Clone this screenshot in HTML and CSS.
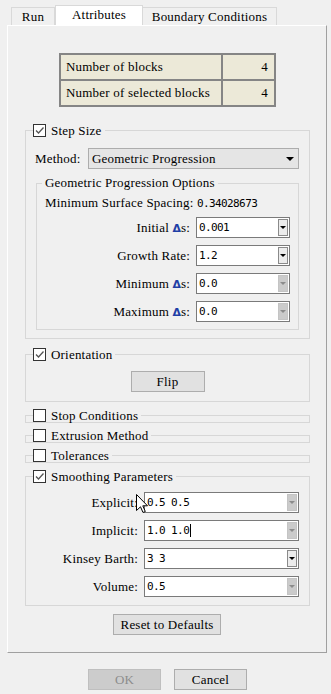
FILE: index.html
```html
<!DOCTYPE html>
<html lang="en">
<head>
  <meta charset="UTF-8">
  <title>Attributes</title>
  <link rel="stylesheet" href="styles.css">
</head>
<body>
  <div class="tabs">
    <div class="tab tab-run">Run</div>
    <div class="tab tab-active">Attributes</div>
    <div class="tab tab-bc">Boundary Conditions</div>
  </div>

  <div class="panel">
    <div class="info">
      <div class="cell">Number of blocks</div>
      <div class="cell num">4</div>
      <div class="cell">Number of selected blocks</div>
      <div class="cell num">4</div>
    </div>

    <fieldset class="group step">
      <legend><span class="cb checked"><svg width="11" height="11" viewBox="0 0 11 11"><path d="M2 5.5 L4.5 8 L9.5 2.5" fill="none" stroke="#555" stroke-width="1.3"/></svg></span>Step Size</legend>
      <div class="method">
        <span class="method-label">Method:</span>
        <div class="select"><span>Geometric Progression</span><i class="tri"></i></div>
      </div>
      <fieldset class="sub">
        <legend>Geometric Progression Options</legend>
        <div class="spacing">Minimum Surface Spacing: <span class="val">0.34028673</span></div>
        <div class="row first">
          <span>Initial <b class="delta">Δ</b>s:</span>
          <div class="combo w94"><span class="val">0.001</span><i class="drop"></i></div>
        </div>
        <div class="row">
          <span>Growth Rate:</span>
          <div class="combo w94"><span class="val">1.2</span><i class="drop"></i></div>
        </div>
        <div class="row">
          <span>Minimum <b class="delta">Δ</b>s:</span>
          <div class="combo w94"><span class="val">0.0</span><i class="drop off"></i></div>
        </div>
        <div class="row">
          <span>Maximum <b class="delta">Δ</b>s:</span>
          <div class="combo w94"><span class="val">0.0</span><i class="drop off"></i></div>
        </div>
      </fieldset>
    </fieldset>

    <fieldset class="group orient">
      <legend><span class="cb checked"><svg width="11" height="11" viewBox="0 0 11 11"><path d="M2 5.5 L4.5 8 L9.5 2.5" fill="none" stroke="#555" stroke-width="1.3"/></svg></span>Orientation</legend>
      <button class="btn flip">Flip</button>
    </fieldset>

    <fieldset class="group closed first-closed">
      <legend><span class="cb"></span>Stop Conditions</legend>
    </fieldset>
    <fieldset class="group closed">
      <legend><span class="cb"></span>Extrusion Method</legend>
    </fieldset>
    <fieldset class="group closed">
      <legend><span class="cb"></span>Tolerances</legend>
    </fieldset>

    <fieldset class="group smooth">
      <legend><span class="cb checked"><svg width="11" height="11" viewBox="0 0 11 11"><path d="M2 5.5 L4.5 8 L9.5 2.5" fill="none" stroke="#555" stroke-width="1.3"/></svg></span>Smoothing Parameters</legend>
      <div class="row first">
        <span>Explicit:</span>
        <div class="combo w155">
          <span class="val">0.5 0.5</span><i class="drop off"></i>
          <svg class="cursor" width="13" height="20" viewBox="0 0 13 20"><path d="M0.5 0.5 V16.5 L4.5 12.8 L7 18.5 L9.3 17.5 L6.8 11.8 H11.5 Z" fill="#fff" stroke="#000" stroke-width="1" stroke-linejoin="miter"/></svg>
        </div>
      </div>
      <div class="row">
        <span>Implicit:</span>
        <div class="combo w155"><span class="val caret">1.0 1.0</span><i class="drop off"></i></div>
      </div>
      <div class="row">
        <span>Kinsey Barth:</span>
        <div class="combo w155"><span class="val">3 3</span><i class="drop"></i></div>
      </div>
      <div class="row">
        <span>Volume:</span>
        <div class="combo w155"><span class="val">0.5</span><i class="drop off"></i></div>
      </div>
    </fieldset>

    <button class="btn reset">Reset to Defaults</button>
  </div>

  <div class="footer">
    <button class="btn dlg" disabled>OK</button>
    <button class="btn dlg">Cancel</button>
  </div>
</body>
</html>
```

FILE: styles.css
```css
body {
  margin: 0;
  width: 331px;
  height: 694px;
  overflow: hidden;
  background: #f0f0f0;
  font-family: "Liberation Serif", "Noto Sans CJK SC", serif;
  font-size: 13px;
  line-height: 13px;
  letter-spacing: 0.2px;
  color: #000;
}
.tabs {
  display: flex;
  align-items: flex-end;
  height: 20px;
  padding: 5px 0 0 11px;
}
.tab {
  box-sizing: border-box;
  height: 18px;
  line-height: 17px;
  text-align: center;
  border: 1px solid #d9d9d9;
  border-bottom: none;
  background: #f0f0f0;
}
.tab-run { width: 44px; }
.tab-active {
  width: 88px;
  height: 20px;
  line-height: 17px;
  background: #fff;
  border-color: #d9d9d9;
}
.tab-bc { width: 134px; border-left: none; }

.panel {
  box-sizing: border-box;
  margin-left: 7px;
  width: 320px;
  height: 628px;
  padding-top: 27px;
  border: 1px solid;
  border-color: #fff #a0a0a0 #a0a0a0 #fff;
}

.info {
  display: grid;
  grid-template-columns: 160px 51px;
  grid-auto-rows: 24px;
  gap: 2px;
  padding: 2px;
  width: 213px;
  margin-left: 51px;
  background: #858585;
}
.cell {
  background: #ece9d8;
  line-height: 23px;
  padding-left: 5px;
}
.cell.num {
  text-align: right;
  padding: 0 6px 0 0;
}

fieldset {
  margin: 0;
  padding: 0;
  min-width: 0;
  border: 1px solid #d7d7d7;
}
.group {
  margin: 0 16px 0 17px;
}
.group > legend {
  display: flex;
  align-items: center;
  gap: 5px;
  height: 13px;
  line-height: 12px;
  margin-left: 7px;
  padding: 0 3px 0 0;
}
.cb {
  box-sizing: border-box;
  width: 13px;
  height: 13px;
  border: 1px solid #333;
  background: #fff;
  display: flex;
  align-items: center;
  justify-content: center;
}

.step { margin-top: 17px; padding-bottom: 8px; }
.method {
  display: flex;
  align-items: center;
  height: 21px;
  margin: 11px 0 0 9px;
}
.method-label { width: 53px; }
.select {
  box-sizing: border-box;
  width: 211px;
  height: 21px;
  border: 1px solid #adadad;
  background: #e5e5e5;
  display: flex;
  align-items: center;
  justify-content: space-between;
  padding: 0 4px 0 3px;
}
.tri {
  width: 0;
  height: 0;
  border-left: 4px solid transparent;
  border-right: 4px solid transparent;
  border-top: 4px solid #000;
}

.sub {
  margin: 8px 10px 0 10px;
  padding: 0 8px 7px 0;
}
.sub > legend {
  line-height: 12px;
  margin-left: 5px;
  padding: 0 3px;
}
.spacing {
  line-height: 14px;
  margin: 7px 0 0 8px;
}

.val {
  font-family: "DejaVu Sans Mono", monospace;
  font-size: 11px;
  letter-spacing: -0.6px;
}

.row {
  display: flex;
  align-items: center;
  justify-content: flex-end;
  height: 21px;
  margin-top: 7px;
}
.row.first { margin-top: 6px; }
.row > span { margin-right: 6px; }
.delta {
  font-family: "DejaVu Sans", sans-serif;
  font-size: 11px;
  letter-spacing: 0;
  color: #1f3fa6;
}

.combo {
  position: relative;
  box-sizing: border-box;
  height: 21px;
  border: 1px solid #7a7a7a;
  background: #fff;
  display: flex;
  align-items: center;
  padding-left: 2px;
}
.w94 { width: 94px; }
.w155 { width: 155px; }
.drop {
  box-sizing: border-box;
  width: 10px;
  height: 17px;
  margin: 0 1px 0 auto;
  border: 1px solid #8a8a8a;
  background: #ececec;
  display: flex;
  align-items: center;
  justify-content: center;
}
.drop::after {
  content: "";
  border-left: 3px solid transparent;
  border-right: 3px solid transparent;
  border-top: 3px solid #000;
}
.drop.off {
  border-color: #c4c4c4;
  background: #cbcbcb;
}
.drop.off::after { border-top-color: #8c8c8c; }
.caret {
  padding-right: 1px;
  border-right: 1px solid #000;
  line-height: 13px;
}
.cursor {
  position: absolute;
  left: -9px;
  top: 1px;
}

.btn {
  box-sizing: border-box;
  display: block;
  height: 21px;
  padding: 0;
  font: inherit;
  letter-spacing: inherit;
  color: #000;
  border: 1px solid #adadad;
  background: #e1e1e1;
}
.orient { margin-top: 9px; padding-bottom: 9px; }
.flip {
  width: 74px;
  margin: 10px auto 0;
}
.closed { margin-top: 6px; }
.first-closed { margin-top: 7px; }
.smooth {
  margin-top: 7px;
  padding: 0 10px 8px 0;
}
.smooth .row.first { margin-top: 9px; }
.reset {
  width: 108px;
  margin: 8px auto 0;
}

.footer {
  display: flex;
  gap: 13px;
  margin-top: 16px;
  padding-left: 88px;
}
.dlg { width: 73px; }
.dlg:disabled {
  background: #cccccc;
  border-color: #bfbfbf;
  color: #8d8d8d;
}
```
